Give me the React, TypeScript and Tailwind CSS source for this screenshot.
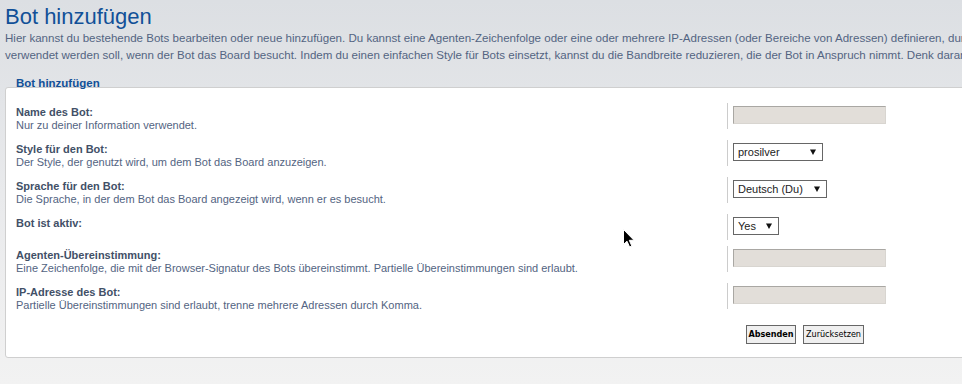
import React from 'react';

const rows = [
  { label: 'Name des Bot:', desc: 'Nur zu deiner Information verwendet.', kind: 'input' },
  { label: 'Style für den Bot:', desc: 'Der Style, der genutzt wird, um dem Bot das Board anzuzeigen.', kind: 'select', value: 'prosilver', width: 'w-[90px]' },
  { label: 'Sprache für den Bot:', desc: 'Die Sprache, in der dem Bot das Board angezeigt wird, wenn er es besucht.', kind: 'select', value: 'Deutsch (Du)', width: 'w-[94px]' },
  { label: 'Bot ist aktiv:', desc: '', kind: 'select', value: 'Yes', width: 'w-[46px]' },
  { label: 'Agenten-Übereinstimmung:', desc: 'Eine Zeichenfolge, die mit der Browser-Signatur des Bots übereinstimmt. Partielle Übereinstimmungen sind erlaubt.', kind: 'input' },
  { label: 'IP-Adresse des Bot:', desc: 'Partielle Übereinstimmungen sind erlaubt, trenne mehrere Adressen durch Komma.', kind: 'input' },
];

function Arrow() {
  return (
    <svg width="6" height="6" viewBox="0 0 6 6" className="shrink-0">
      <polygon points="0,0.5 6,0.5 3,6" fill="#111" />
    </svg>
  );
}

function Field({ kind, value, width }: { kind: string; value?: string; width?: string }) {
  if (kind === 'input') {
    return (
      <div className="h-[18px] w-[153px] border border-[#a9a7a3] border-b-[#d8d5d0] border-r-[#d8d5d0] bg-[#e2ded9]" />
    );
  }
  return (
    <div className={`flex h-[18px] items-center justify-between border border-[#666666] bg-white pl-[4px] pr-[6px] text-[11px] text-[#222] ${width}`}>
      <span>{value}</span>
      <Arrow />
    </div>
  );
}

export default function App() {
  return (
    <div className="relative h-[384px] w-[962px] overflow-hidden bg-gradient-to-b from-[#dcdfe3] via-[#e9eaec] to-[#f2f2f2] font-['Liberation_Sans',Arial,sans-serif]">
      <div className="w-[1300px] pl-[5px]">
        <h1 className="pt-[4px] text-[22px] leading-[26px] text-[#115098]">Bot hinzufügen</h1>
        <p className="whitespace-nowrap text-[11.55px] leading-[17px] text-[#536482]">
          Hier kannst du bestehende Bots bearbeiten oder neue hinzufügen. Du kannst eine Agenten-Zeichenfolge oder eine oder mehrere IP-Adressen (oder Bereiche von Adressen) definieren, durch die der Bot erkannt wird, und festlegen, welcher Style und welche Sprache
          <br />
          verwendet werden soll, wenn der Bot das Board besucht. Indem du einen einfachen Style für Bots einsetzt, kannst du die Bandbreite reduzieren, die der Bot in Anspruch nimmt. Denk daran, eine passende Sprache einzustellen.
        </p>

        <div className="relative mt-[23px] w-[1250px] rounded-[3px] border border-[#cfcfcf] bg-white pb-[13px] pl-[10px] pt-[15px]">
          <span className="absolute left-[10px] top-[-11px] text-[11.5px] font-bold leading-[13px] text-[#115098]">
            Bot hinzufügen
          </span>

          {rows.map((r) => (
            <div key={r.label} className={`flex items-start ${r.desc ? 'mb-[8px]' : 'mb-[6px]'}`}>
              <div className="w-[711px] pt-[3px] text-[11px] leading-[13px]">
                <div className="font-bold text-[#425067]">{r.label}</div>
                {r.desc ? <div className="text-[#536482]">{r.desc}</div> : null}
              </div>
              <div className="h-[26px] border-l border-[#cccccc] pl-[5px] pt-[3px]">
                <Field kind={r.kind} value={r.value} width={r.width} />
              </div>
            </div>
          ))}

          <div className="ml-[730px] flex gap-[7px] pt-[5px] font-['DejaVu_Sans_Condensed','DejaVu_Sans',sans-serif] text-[9px]">
            <button className="h-[19px] w-[50px] border border-[#666666] bg-[#efefef] font-bold text-black">Absenden</button>
            <button className="h-[19px] w-[61px] border border-[#666666] bg-[#efefef] text-black">Zurücksetzen</button>
          </div>
        </div>
      </div>

      <svg className="absolute left-[623px] top-[229px]" width="12" height="19" viewBox="0 0 12 19">
        <path d="M0.5 0.5 L0.5 15.5 L4 12.2 L6.6 18 L8.8 17 L6.3 11.3 L11 11.3 Z" fill="#000" stroke="#fff" strokeWidth="1" />
      </svg>
    </div>
  );
}
